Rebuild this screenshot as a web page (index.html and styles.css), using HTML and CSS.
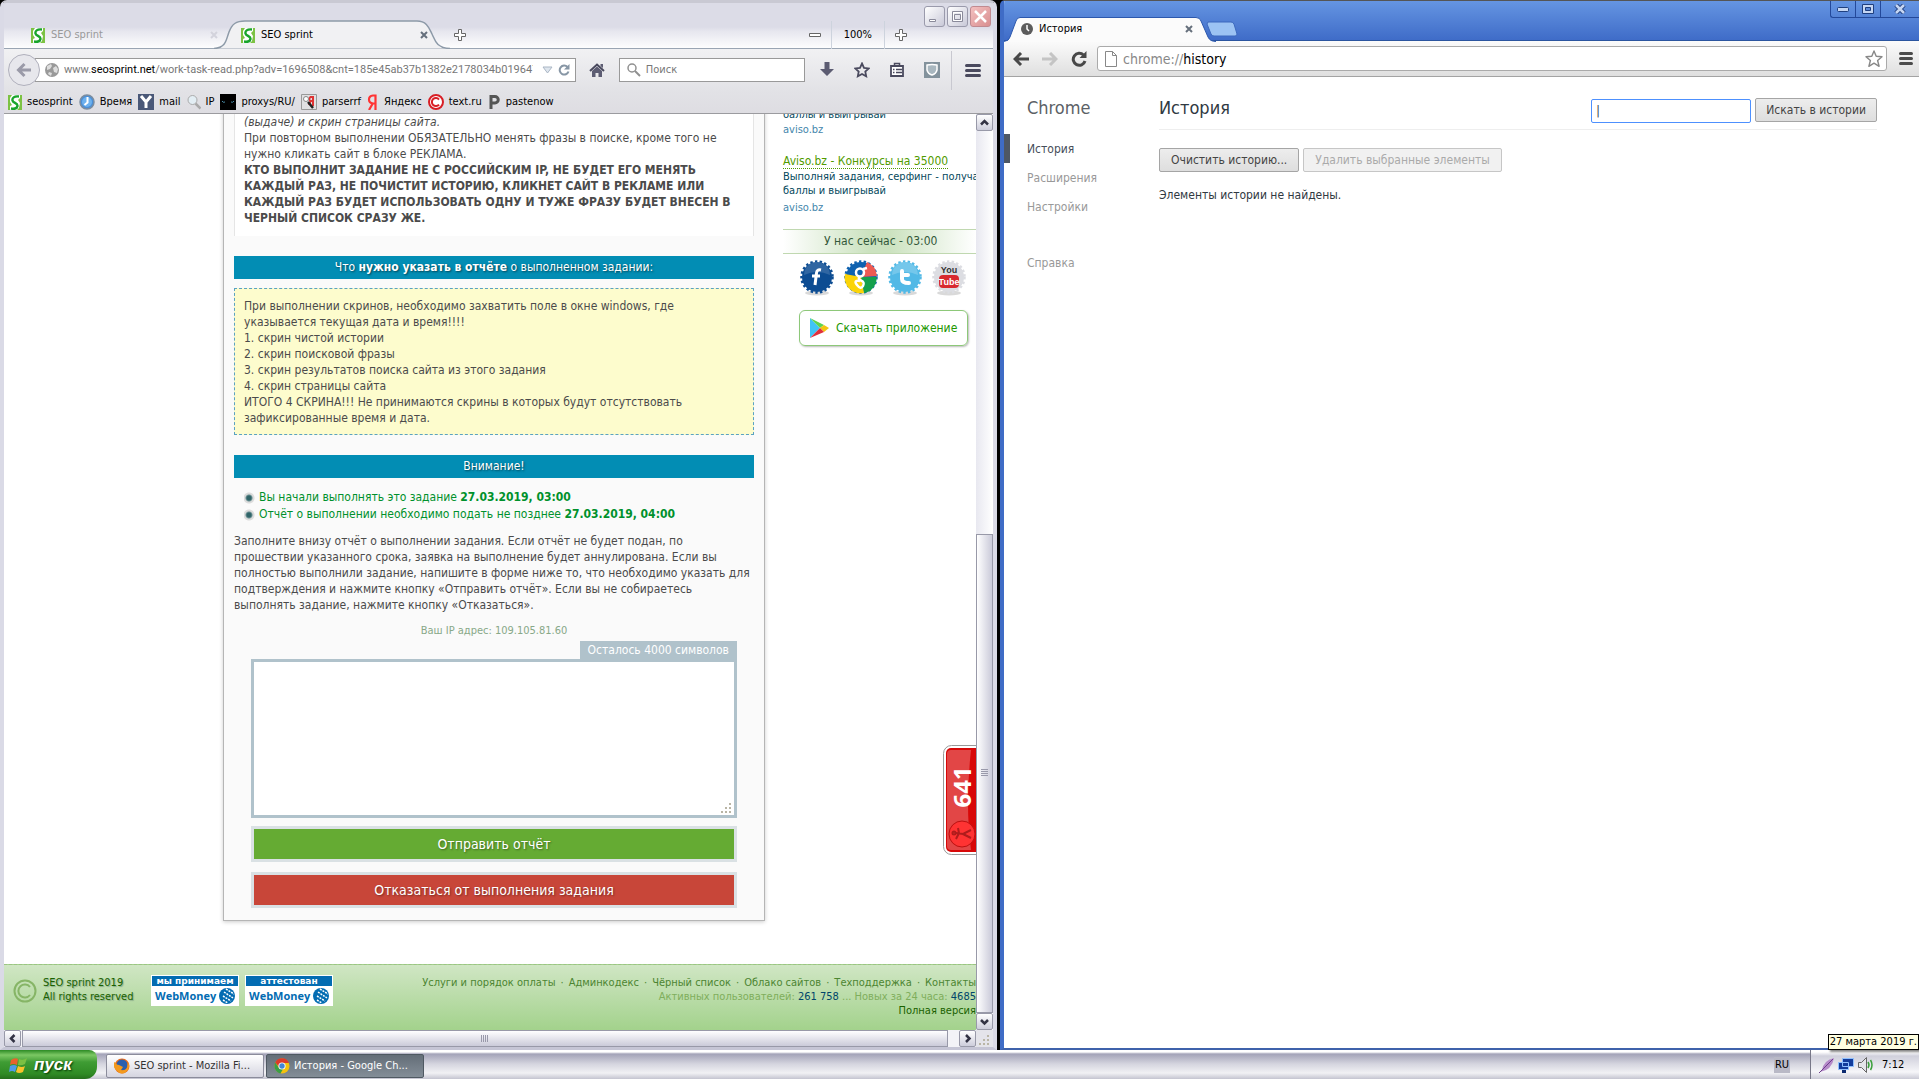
FILE: index.html
```html
<!DOCTYPE html>
<html lang="ru">
<head>
<meta charset="utf-8">
<title>Рабочий стол</title>
<link rel="stylesheet" href="styles.css">
</head>
<body>
<svg class="defs" width="0" height="0" aria-hidden="true">
  <symbol id="seo" viewBox="0 0 14 15"><path fill="#7cc243" d="M0 0h14v15H0z"/><path fill="#fff" d="M4 0h8v3l-2 2 2 3-1 5-2 2H2v-4l2-1-2-3V3z"/><path fill="none" stroke="#18a52c" stroke-width="2.400" d="M11 1.500C6 1 4 3 4.500 5.500S10 8 9.500 11 6 14 3 13.500"/></symbol>
  <symbol id="x" viewBox="0 0 8 8"><path stroke="currentColor" stroke-width="2" d="M1 1l6 6M7 1L1 7"/></symbol>
  <symbol id="chrome" viewBox="0 0 16 16"><circle cx="8" cy="8" r="7.500" fill="#f4c20d"/><path fill="#db3b2b" d="M1.300 4.500A7.500 7.500 0 0 1 15 5H8L5 9z"/><path fill="#3a9e46" d="M1.300 4.500L5 10l4 1-2.500 4.400A7.500 7.500 0 0 1 1.300 4.500z"/><circle cx="8" cy="8" r="3.600" fill="#fff"/><circle cx="8" cy="8" r="2.700" fill="#4285d8"/></symbol>
  <symbol id="globe" viewBox="0 0 14 14"><circle cx="7" cy="7" r="7" fill="#999"/><path fill="#ddd" d="M2 3l4-2 1 2-2 3-3 1zM8 5l3-2 2 3-1 4-3-1zM4 9l3 1-1 3-3-2z"/></symbol>
  <symbol id="wm" viewBox="0 0 88 31"><path fill="#fff" d="M0 0h88v31H0z"/><path fill="#036cb2" d="M1 1h86v10H1z"/><circle cx="76" cy="21" r="8" fill="#036cb2"/><path fill="none" stroke="#fff" stroke-width="1.500" stroke-dasharray="2 1" d="M75 14l8 5M73 17l9 6M72 21l8 5M72 25l5 3"/></symbol>
  <symbol id="gear" viewBox="0 0 34 36"><ellipse cx="17" cy="33" rx="12" ry="2.500" fill="#000" opacity=".15"/><circle cx="17" cy="17" r="15" fill="currentColor"/><circle cx="17" cy="17" r="15.500" fill="none" stroke="currentColor" stroke-width="2.500" stroke-dasharray="2.400 2.300"/></symbol>
</svg>
<div class="desktop">
  <div class="windows">
    <section class="fx" aria-label="Mozilla Firefox">
      <div class="fx-tabs">
        <div class="fx-tab"><svg width="14" height="15"><use href="#seo"/></svg><span>SEO sprint</span><button class="plain pale" aria-label="Закрыть вкладку"><svg width="8" height="8"><use href="#x"/></svg></button></div>
        <div class="fx-tab active"><svg class="tab-shape" viewBox="0 0 236 29" preserveAspectRatio="none"><path fill="#f1f1f3" stroke="#8d9aa8" stroke-width="1.500" d="M0 28.500C12 28 12 20 15 12S22 1 31 1H203C213 1 215 8 218 14S222 28 236 28.500"/></svg><svg width="14" height="15"><use href="#seo"/></svg><span>SEO sprint</span><button class="plain slate" aria-label="Закрыть вкладку"><svg width="8" height="8"><use href="#x"/></svg></button></div>
        <button class="plain newtab" aria-label="Новая вкладка"><svg width="12" height="12"><path fill="#fff" stroke="#666" d="M4.500.5h3v4h4v3h-4v4h-3v-4h-4v-3h4z"/></svg></button>
        <div class="zoom"><button class="plain" aria-label="Уменьшить"><svg width="12" height="12"><path fill="#fff" stroke="#666" d="M.5 4.500h11v3H.5z"/></svg></button><span class="zoom-value">100%</span><button class="plain" aria-label="Увеличить"><svg width="12" height="12"><path fill="#fff" stroke="#666" d="M4.500.5h3v4h4v3h-4v4h-3v-4h-4v-3h4z"/></svg></button></div>
        <div class="fx-controls"><button aria-label="Свернуть"><svg width="13" height="13"><path fill="#fff" stroke="#8a8a9a" d="M1.500 9.500h6v2h-6z"/></svg></button><button aria-label="Развернуть"><svg width="13" height="13"><path fill="none" stroke="#8a8a9a" d="M1.500 1.500h10v10h-10zM3.500 4.500h6v5h-6z"/><path fill="none" stroke="#fff" d="M2.500 2.500h8v8h-8z"/></svg></button><button class="red" aria-label="Закрыть"><svg width="13" height="13"><path stroke="#fff" stroke-width="2.500" d="M1 1l11 11M12 1L1 12"/></svg></button></div>
      </div>
      <div class="fx-nav">
        <button class="back" aria-label="Назад"><svg width="16" height="16"><path fill="none" stroke="#9a9aa8" stroke-width="3" d="M15 8H3M8.500 2L2.500 8l6 6"/></svg></button>
        <div class="url"><svg width="14" height="14"><use href="#globe"/></svg><span class="url-text">www.<b>seosprint.net</b>/work-task-read.php?adv=1696508&amp;cnt=185e45ab37b1382e2178034b0196470</span><svg width="11" height="8"><path fill="#dfe6ee" stroke="#aab6c4" d="M1 1h9L5.500 7z"/></svg><svg width="12" height="12"><path fill="none" stroke="#8796a5" stroke-width="2" d="M9.500 3A4.500 4.500 0 1 0 10.500 7.500"/><path fill="#8796a5" d="M6 5.500h5.500V0z"/></svg></div>
        <button class="plain home" aria-label="Домой"><svg width="16" height="15"><path fill="none" stroke="#4a4a5e" stroke-width="2" d="M1 8l7-6.500L15 8"/><path fill="#5c5c72" d="M11.500 1H14v4l-2.500-2zM3 8l5-4.500L13 8v6H9.500v-4h-3v4H3z"/></svg></button>
        <label class="fx-search"><svg width="14" height="14"><circle cx="5" cy="5" r="4" fill="none" stroke="#909090" stroke-width="1.500"/><path stroke="#909090" stroke-width="2" d="M8 8l5 5"/></svg><input type="text" placeholder="Поиск" aria-label="Поиск"></label>
        <div class="fx-icons">
          <button class="plain" aria-label="Загрузки"><svg width="14" height="15"><path fill="#5c5c72" d="M4.500 0h5v7H14l-7 7-7-7h4.500z"/></svg></button>
          <button class="plain" aria-label="Закладка"><svg width="16" height="16"><path fill="none" stroke="#4a4a5e" stroke-width="1.800" d="M8 1.500l2 4.300 4.700.6-3.400 3.200.9 4.700L8 12l-4.200 2.300.9-4.700L1.300 6.400 6 5.800z"/></svg></button>
          <button class="plain" aria-label="Список закладок"><svg width="14" height="15"><path fill="#fff" stroke="#4a4a5e" stroke-width="1.800" d="M1 4h12v10H1z"/><path fill="none" stroke="#4a4a5e" stroke-width="1.500" d="M4.500 4V1.500h5V4M3 7.500h1.500M6 7.500h6M3 10.500h1.500M6 10.500h6"/></svg></button>
          <button class="plain" aria-label="Защита"><svg width="16" height="16"><path fill="#83929c" d="M0 0h16v16H0z"/><path fill="#a9b7bf" stroke="#fff" stroke-width="1.500" d="M3 3q5-1 10 0v5q-1 4-5 5-4-1-5-5z"/></svg></button>
        </div>
        <button class="plain burger" aria-label="Меню"><svg width="16" height="13"><path stroke="#4a4a5e" stroke-width="3" stroke-linecap="round" d="M1.500 1.500h13M1.500 6.500h13M1.500 11.500h13"/></svg></button>
      </div>
      <nav class="bookmarks">
        <a href="#"><svg width="14" height="15"><use href="#seo"/></svg>seosprint</a>
        <a href="#"><svg width="16" height="16"><circle cx="8" cy="8" r="7" fill="#4b8fd8" stroke="#7b8da0" stroke-width="1.500"/><circle cx="8" cy="8" r="5" fill="#6db1ee"/><path fill="none" stroke="#fff" stroke-width="2" d="M8.500 3v5.500L5.500 11"/></svg>Время</a>
        <a href="#"><svg width="16" height="16"><path fill="#4a5878" d="M0 0h16v16H0z"/><path fill="none" stroke="#fff" stroke-width="3" d="M3 2l5 6 5-6M8 8v6"/></svg>mail</a>
        <a href="#"><svg width="14" height="16"><circle cx="5.500" cy="6" r="4.500" fill="#e3eef4" stroke="#aaa"/><path stroke="#aaa" stroke-width="2.500" d="M8.500 9.500l5 5"/></svg>IP</a>
        <a href="#"><svg width="16" height="16"><path d="M0 0h16v16H0z"/><path fill="none" stroke="#4a8ca8" d="M2 7q1 2 3 1M11 8q2 1 3-1"/></svg>proxys/RU/</a>
        <a href="#"><svg width="16" height="16"><path fill="#e0e0e2" stroke="#999" d="M.5.5h15v15H.5z"/><path fill="none" stroke="#d33" stroke-width="2" d="M12 2v10M12 3H9.500L8 5l1.500 2H12M9.500 7L8 11"/><circle cx="5" cy="5" r="2.500" fill="#fff" stroke="#888"/><path stroke="#222" stroke-width="2.500" d="M7 8l5 6"/></svg>parserrf</a>
        <a href="#"><svg width="12" height="16"><path fill="none" stroke="#f33" stroke-width="2.200" d="M8.500 16V1.500H6Q2 2 2 5.500T6 9.500h2M6 9L2 16"/></svg>Яндекс</a>
        <a href="#"><svg width="16" height="16"><circle cx="8" cy="8" r="7" fill="#fff" stroke="#d81f26" stroke-width="2"/><path fill="none" stroke="#d81f26" stroke-width="2" d="M11 5.500a4 4 0 1 0 0 5"/></svg>text.ru</a>
        <a href="#"><svg width="13" height="16"><path fill="none" stroke="#555" stroke-width="3" d="M3 15V2.500h4a3 3 0 0 1 0 6.500H3"/></svg>pastenow</a>
      </nav>
      <div class="fx-view">
        <div class="page">
          <div class="page-body">
            <main class="card">
              <div class="task-text"><p><i>скрин поисковой фразы, скрин результатов поиска сайта в поиске<br>(выдаче) и скрин страницы сайта.</i></p><p>При повторном выполнении ОБЯЗАТЕЛЬНО менять фразы в поиске, кроме того не<br>нужно кликать сайт в блоке РЕКЛАМА.</p><p><b>КТО ВЫПОЛНИТ ЗАДАНИЕ НЕ С РОССИЙСКИМ IP, НЕ БУДЕТ ЕГО МЕНЯТЬ<br>КАЖДЫЙ РАЗ, НЕ ПОЧИСТИТ ИСТОРИЮ, КЛИКНЕТ САЙТ В РЕКЛАМЕ ИЛИ<br>КАЖДЫЙ РАЗ БУДЕТ ИСПОЛЬЗОВАТЬ ОДНУ И ТУЖЕ ФРАЗУ БУДЕТ ВНЕСЕН В<br>ЧЕРНЫЙ СПИСОК СРАЗУ ЖЕ.</b></p></div>
              <h2 class="bar">Что <b>нужно указать в отчёте</b> о выполненном задании:</h2>
              <div class="note">При выполнении скринов, необходимо захватить поле в окне windows, где<br>указывается текущая дата и время!!!!<br>1. скрин чистой истории<br>2. скрин поисковой фразы<br>3. скрин результатов поиска сайта из этого задания<br>4. скрин страницы сайта<br>ИТОГО 4 СКРИНА!!! Не принимаются скрины в которых будут отсутствовать<br>зафиксированные время и дата.</div>
              <h2 class="bar">Внимание!</h2>
              <ul class="dates"><li>Вы начали выполнять это задание <b>27.03.2019, 03:00</b></li><li>Отчёт о выполнении необходимо подать не позднее <b>27.03.2019, 04:00</b></li></ul>
              <p class="hint">Заполните внизу отчёт о выполнении задания. Если отчёт не будет подан, по<br>прошествии указанного срока, заявка на выполнение будет аннулирована. Если вы<br>полностью выполнили задание, напишите в форме ниже то, что необходимо указать для<br>подтверждения и нажмите кнопку «Отправить отчёт». Если вы не собираетесь<br>выполнять задание, нажмите кнопку «Отказаться».</p>
              <p class="ip">Ваш IP адрес: 109.105.81.60</p>
              <form class="report">
                <label class="left-count" for="rep">Осталось 4000 символов</label>
                <div class="area"><textarea id="rep"></textarea><svg class="grip" width="12" height="12"><path stroke="#b9b5a5" stroke-width="2" stroke-dasharray="2 2" d="M8 1h2M4 5h6M0 9h10"/></svg></div>
                <button type="button" class="send">Отправить отчёт</button>
                <button type="button" class="refuse">Отказаться от выполнения задания</button>
              </form>
            </main>
            <aside class="side">
              <div class="cut">баллы и выигрывай</div>
              <a class="site" href="#">aviso.bz</a>
              <a class="ad" href="#">Aviso.bz - Конкурсы на 35000</a>
              <p class="ad-text">Выполняй задания, серфинг - получай<br>баллы и выигрывай</p>
              <a class="site" href="#">aviso.bz</a>
              <div class="clock">У нас сейчас - 03:00</div>
              <div class="social">
                <a href="#" aria-label="Facebook"><svg class="c-fb" width="34" height="36"><use href="#gear"/><path fill="#fff" opacity=".15" d="M4 15a13 13 0 0 1 26 0q-13-6-26 0z"/><path fill="none" stroke="#fff" stroke-width="3" d="M21 10q-4-1-4.500 3L15 25M12 16h8"/></svg></a>
                <a href="#" aria-label="Google"><svg class="c-g" width="34" height="36"><use href="#gear"/><path fill="#ee5a52" d="M17 17L23 2Q32 6 33 16z"/><path fill="#15a04c" d="M17 17l15.500 0A15 15 0 0 1 20 33z"/><path fill="#fbd408" d="M17 17l3 16A16 16 0 0 1 1 14z"/><g fill="none" stroke="#fff" stroke-width="2.500"><circle cx="16" cy="12.500" r="4"/><path d="M19 9l4-1M16 17q-3 2 1 3.500T19 26t-6-1 3-4"/></g></svg></a>
                <a href="#" aria-label="Twitter"><svg class="c-tw" width="34" height="36"><use href="#gear"/><path fill="#fff" opacity=".2" d="M4 15a13 13 0 0 1 26 0q-13-6-26 0z"/><path fill="none" stroke="#fff" stroke-width="4" stroke-linecap="round" d="M14 11v8q0 4 7 4M14 15h6"/></svg></a>
                <a href="#" aria-label="YouTube"><svg class="c-yt" width="34" height="36"><use href="#gear"/><rect x="7" y="15" width="20" height="13" rx="4" fill="#d8292f"/><text x="17" y="13" class="yt yt-dark">You</text><text x="17" y="25" class="yt">Tube</text></svg></a>
              </div>
              <a class="app" href="#"><svg width="21" height="22"><path fill="#40c4f5" d="M1 1v20L11 11z"/><path fill="#5ed34e" d="M1 1l14 7-4 3z"/><path fill="#f2c510" d="M15 8l5 3-5 4-4-4z"/><path fill="#e0303c" d="M1 21l10-10 4 4z"/></svg>Скачать приложение</a>
            </aside>
            <a class="badge" href="#" aria-label="641"><svg width="34" height="112"><rect x="1.500" y="1.500" width="50" height="109" rx="8" fill="#fff" stroke="#999"/><rect x="4" y="4" width="50" height="104" rx="5" fill="#d80808"/><path fill="#fff" opacity=".25" d="M9 6h20q-6 55 0 100H9q-4 0-4-4V10q0-4 4-4z"/><circle cx="20" cy="90" r="13" fill="#f33" stroke="#b11"/><g fill="none" stroke="#b01c1c" stroke-width="2"><circle cx="12" cy="89" r="1.500"/><path d="M14 89l7 1 8-4M21 90l8 4M16 84l1 5-3 6"/></g><text class="badge-num" transform="rotate(-90)" x="-43" y="29">641</text></svg></a>
          </div>
          <footer class="foot">
            <svg class="copy" width="24" height="24"><circle cx="12" cy="12" r="10.500" fill="none" stroke="#86b566" stroke-width="2"/><path fill="none" stroke="#86b566" stroke-width="2" d="M17 8a6.500 6.500 0 1 0 0 8"/></svg>
            <p class="rights">SEO sprint 2019<br>All rights reserved</p>
            <a class="wm" href="#"><svg width="88" height="31"><use href="#wm"/><text class="wm-top" x="44" y="9">мы принимаем</text><text class="wm-name" x="4" y="25">WebMoney</text></svg></a>
            <a class="wm" href="#"><svg width="88" height="31"><use href="#wm"/><text class="wm-top" x="44" y="9">аттестован</text><text class="wm-name" x="4" y="25">WebMoney</text></svg></a>
            <div class="foot-right">
              <nav><a href="#">Услуги и порядок оплаты</a><i>·</i><a href="#">Админкодекс</a><i>·</i><a href="#">Чёрный список</a><i>·</i><a href="#">Облако сайтов</a><i>·</i><a href="#">Техподдержка</a><i>·</i><a href="#">Контакты</a></nav>
              <p class="stat">Активных пользователей: <b>261 758</b> ... Новых за 24 часа: <b>4685</b></p>
              <a class="full" href="#">Полная версия</a>
            </div>
          </footer>
        </div>
        <div class="vbar"><button class="sb" aria-label="Вверх"><svg width="9" height="9"><path fill="none" stroke="#334" stroke-width="2.500" d="M1 6.500L4.500 3 8 6.500"/></svg></button><div class="v-gap"></div><div class="v-thumb"><svg width="7" height="8"><path stroke="#99a" d="M0 .5h7M0 2.500h7M0 4.500h7M0 6.500h7"/></svg></div><button class="sb" aria-label="Вниз"><svg width="9" height="9"><path fill="none" stroke="#334" stroke-width="2.500" d="M1 3l3.500 3.500L8 3"/></svg></button></div>
        <div class="hbar"><button class="sb" aria-label="Влево"><svg width="9" height="9"><path fill="none" stroke="#334" stroke-width="2.500" d="M6.500 1L3 4.500 6.500 8"/></svg></button><div class="h-thumb"><svg width="8" height="7"><path stroke="#99a" d="M.5 0v7M2.500 0v7M4.500 0v7M6.500 0v7"/></svg></div><button class="sb" aria-label="Вправо"><svg width="9" height="9"><path fill="none" stroke="#334" stroke-width="2.500" d="M3 1l3.500 3.500L3 8"/></svg></button></div>
        <div class="corner"><svg width="12" height="12"><path stroke="#b9b5a5" stroke-width="2" stroke-dasharray="2 2" d="M8 1h2M4 5h6M0 9h10"/></svg></div>
      </div>
    </section>

    <section class="gc" aria-label="Google Chrome">
      <div class="gc-title">
        <div class="gc-tab"><svg class="gc-shape" viewBox="0 0 212 25" preserveAspectRatio="none"><path fill="#fbfbfb" stroke="#2c58ad" d="M0 24.500Q5 24 6 20L12 4Q13 .5 16 .5H192Q196 .5 197 4L204 20Q206 24.500 212 24.500"/></svg><svg width="12" height="12"><circle cx="6" cy="6" r="6" fill="#5c5c5c"/><path fill="none" stroke="#fff" stroke-width="1.500" d="M6 2v4l2 2"/></svg><span>История</span><button class="plain slate" aria-label="Закрыть вкладку"><svg width="8" height="8"><use href="#x"/></svg></button></div>
        <button class="plain gc-new" aria-label="Новая вкладка"><svg width="32" height="16"><path fill="#9cc3f3" stroke="#3c69bd" d="M2 1h23q2 0 3 2l3 10q0 2-2 2H8q-2 0-3-2L1 3z"/></svg></button>
        <div class="gc-controls"><button aria-label="Свернуть"><svg width="12" height="6"><rect x=".5" y="1.500" width="11" height="4" rx="1" fill="#c5d6f3" stroke="#1f3f7f"/></svg></button><button aria-label="Развернуть"><svg width="12" height="10"><path fill="#c5d6f3" stroke="#1f3f7f" d="M.5.5h11v9H.5z"/><path fill="#5b88d8" stroke="#1f3f7f" d="M3.500 3.500h5v3h-5z"/></svg></button><button aria-label="Закрыть"><svg width="12" height="10"><path stroke="#1f3f7f" stroke-width="4.500" d="M2 1l8 8M10 1L2 9"/><path stroke="#c5d6f3" stroke-width="2.500" d="M2 1l8 8M10 1L2 9"/></svg></button></div>
      </div>
      <div class="gc-bar">
        <button class="plain" aria-label="Назад"><svg width="16" height="14"><path fill="none" stroke="#484848" stroke-width="3" d="M16 7H3M8 1L2 7l6 6"/></svg></button>
        <button class="plain" aria-label="Вперёд"><svg width="16" height="14"><path fill="none" stroke="#c4c4c4" stroke-width="3" d="M0 7h13M8 1l6 6-6 6"/></svg></button>
        <button class="plain" aria-label="Обновить"><svg width="16" height="16"><path fill="none" stroke="#484848" stroke-width="3" d="M12.500 4A6 6 0 1 0 14 10"/><path fill="#484848" d="M8.500 7H15.500V0z"/></svg></button>
        <div class="omni"><svg width="12" height="16"><path fill="#fff" stroke="#888" d="M.5.500h7l4 4v11H.5zM7.500.5v4h4"/></svg><span>chrome://<em>history</em></span><svg width="18" height="18"><path fill="#fff" stroke="#888" stroke-width="1.400" stroke-linejoin="round" d="M9 1l2.200 5.300 5.800.4-4.400 3.800 1.500 5.800L9 13.200l-5.100 3.100 1.500-5.800L1 6.700l5.800-.4z"/></svg></div>
        <button class="plain" aria-label="Меню"><svg width="14" height="13"><path stroke="#4c4c4c" stroke-width="3" stroke-linecap="round" d="M1.500 1.500h11M1.500 6.500h11M1.500 11.500h11"/></svg></button>
      </div>
      <div class="gc-view">
        <nav class="gc-nav"><h1>Chrome</h1><a class="on" href="#">История</a><a href="#">Расширения</a><a href="#">Настройки</a><a class="help" href="#">Справка</a></nav>
        <main class="hist">
          <header><h1>История</h1><input type="text" aria-label="Поиск в истории" value="|"><button>Искать в истории</button></header>
          <div class="acts"><button>Очистить историю...</button><button disabled>Удалить выбранные элементы</button></div>
          <p>Элементы истории не найдены.</p>
        </main>
      </div>
    </section>
  </div>

  <div class="taskbar">
    <button class="start"><svg width="18" height="18"><path fill="#e8622c" d="M2 4q4-3 7-1L8 9Q4 7 1 9z"/><path fill="#7bc043" d="M10 3q4 2 8-1l-2 6q-4 2-7 1z"/><path fill="#4f9be8" d="M1 10q4-2 7 0l-2 6q-3-2-6 0z"/><path fill="#f8c32c" d="M9 10q4 2 7 0l-2 6q-4 2-7 0z"/></svg>пуск</button>
    <button class="task"><svg width="16" height="16"><circle cx="8" cy="8" r="7.500" fill="#e66a1c"/><circle cx="8" cy="7" r="5.500" fill="#2a5fae"/><path fill="#f39a1e" d="M1 4q1 3 4 3l4 2-2 3q4 1 6-2l1-6q3 6-2 10T2 12 1 4z"/></svg>SEO sprint - Mozilla Fi...</button>
    <button class="task pressed"><svg width="16" height="16"><use href="#chrome"/></svg>История - Google Ch...</button>
    <span class="lang">RU</span>
    <div class="tray"><svg width="16" height="16"><path fill="#b58ac9" d="M15 1Q5 3 3 13L1 15Q13 13 15 1z"/><path stroke="#6d3e8c" d="M14 2L0 16"/></svg><svg width="18" height="16"><path fill="#123c9c" stroke="#8fc0ff" d="M5.500 1.500h11v8h-11zM1.500 5.500h10v7h-10z"/><path fill="#0c2a70" d="M5 13h4v3H5z"/></svg><svg width="18" height="16"><path fill="#e5e5ea" stroke="#666" d="M1.500 5.500h3l5-5v15l-5-5h-3z"/><path fill="none" stroke="#3ba03b" stroke-width="1.500" d="M11 5q2 3 0 6M13.500 3q3 5 0 10"/></svg><time>7:12</time></div>
    <div class="tip" role="tooltip">27 марта 2019 г.</div>
  </div>
</div>
</body>
</html>
```

FILE: styles.css
```css
* { box-sizing: border-box; }
body { margin: 0; background: #000; font: 11px/14px "DejaVu Sans Condensed", "Noto Sans", sans-serif; color: #000; }
h1, h2, p, ul { margin: 0; padding: 0; font-weight: normal; }
a { color: inherit; text-decoration: none; }
button, input, textarea { font: inherit; color: inherit; }
svg { flex: none; display: block; }
.defs { position: absolute; }
.plain { background: none; border: 0; padding: 0; display: flex; }
.pale { color: #d3d3dc; }
.slate { color: #66707c; }

.desktop { height: 100vh; display: flex; flex-direction: column; overflow: hidden; }
.windows { flex: 1; min-height: 0; display: grid; grid-template-columns: minmax(0, 997fr) minmax(0, 919fr); gap: 3px; }

/* Firefox */
.fx { display: flex; flex-direction: column; min-height: 0; border: solid #dadae6; border-width: 3px 4px; border-top-color: #c9c9d3; border-bottom-color: #c5c5d5; border-radius: 7px 7px 0 0; background: #dfdee3; overflow: hidden; }
.fx-tabs { position: relative; flex: none; height: 46px; display: flex; align-items: flex-end; padding-left: 4px; background: linear-gradient(#dcdce7 0 24px, #e6e6ee 28px, #fff 46px); border-bottom: 1px solid #9aa5b3; }
.fx-tab { position: relative; width: 210px; height: 28px; display: flex; align-items: center; gap: 6px; padding: 2px 0 0 23px; color: #999; }
.fx-tab span { flex: 1; position: relative; }
.fx-tab button, .fx-tab svg { position: relative; }
.fx-tab .tab-shape { position: absolute; left: -4px; top: 0; width: 236px; height: 29px; }
.active { color: #000; z-index: 1; }
.newtab { margin: 0 0 7px 26px; }
.zoom { margin: 0 86px 0 auto; display: flex; align-items: center; height: 28px; padding-top: 2px; gap: 10px; }
.zoom-value { padding: 7px 12px; border: solid #cdd3dd; border-width: 0 1px; }
.fx-controls { position: absolute; right: 2px; top: 3px; display: flex; gap: 2px; }
.fx-controls button { width: 21px; height: 21px; padding: 3px; border: 1px solid #9a9aab; border-radius: 3px; background: linear-gradient(135deg, #fff, #c9c9d8); }
.fx-controls .red { background: linear-gradient(135deg, #f3c0c0, #d98f90); border-color: #c08a90; }
.fx-nav { flex: none; height: 42px; display: flex; align-items: center; padding-left: 4px; background: linear-gradient(#f1f1f3, #e2e2e6); }
.back { width: 32px; height: 32px; border: 1px solid #b0b0bc; border-radius: 16px; background: #e7e7ec; padding: 7px; z-index: 1; }
.url { flex: 545; min-width: 0; height: 24px; margin-left: -5px; padding: 0 5px 0 9px; display: flex; align-items: center; gap: 5px; background: #fff; border: 1px solid #999; color: #777; }
.url-text { flex: 1; margin-right: 4px; white-space: nowrap; overflow: hidden; font-family: Roboto, "Noto Sans", sans-serif; }
.url b { font-weight: normal; color: #000; }
.home { margin: 0 14px 0 13px; }
.fx-search { flex: 184; min-width: 0; height: 24px; display: flex; align-items: center; gap: 5px; padding-left: 7px; background: #fff; border: 1px solid #999; }
.fx-search input { width: 100%; min-width: 0; border: 0; padding: 0; background: none; }
.fx-search input::placeholder { color: #777; opacity: 1; }
.fx-icons { display: flex; gap: 20px; margin: 0 11px 0 15px; }
.burger { border-left: 1px solid #c8c8d0; padding: 13px 12px 13px 13px; }
.bookmarks { flex: none; height: 23px; display: flex; align-items: center; gap: 6px; padding: 0 4px; border-bottom: 1px solid #9b9b9f; background: linear-gradient(#e2e2e6, #dedde2); }
.bookmarks a { display: flex; align-items: center; gap: 5px; }
.fx-view { flex: 1; min-height: 0; display: grid; grid-template: minmax(0, 1fr) 17px / minmax(0, 1fr) 17px; background: #fff; }

.page { display: flex; flex-direction: column; overflow: hidden; font-size: 12px; line-height: 16px; color: #4b4b4b; }
.page-body { position: relative; flex: 1; min-height: 0; display: flex; align-items: flex-end; overflow: hidden; }
.card { flex: none; width: 542px; margin: 0 18px 43px 219px; padding: 0 10px 12px; background: #fafafa; border: 1px solid #b5b5b5; box-shadow: 0 1px 4px #ccc; }
.task-text { background: #fff; border: solid #e5e5e5; border-width: 0 1px; padding: 0 9px 10px; white-space: nowrap; }
.bar { height: 23px; margin-top: 20px; background: #028db4; color: #fff; font-size: 12px; line-height: 23px; text-align: center; text-shadow: 1px 1px 2px #045; }
.note { margin-top: 9px; padding: 9px 9px 8px; background: #fdfccd; border: 1px dashed #5aa2c2; }
.dates { list-style: none; margin: 11px 0 10px 10px; color: #00912c; line-height: 17px; }
.dates li { padding-left: 15px; background: radial-gradient(circle at 5px 9px, #2f6468 0 2px, #6a8f92 3px, #dcdcdc 4px 5px, transparent 6px); }
.hint { white-space: nowrap; }
.ip { margin: 10px 0 2px; font-size: 11px; text-align: center; color: #88a888; }
.report { display: flex; flex-direction: column; margin: 0 17px; }
.left-count { align-self: flex-end; height: 18px; line-height: 18px; padding: 0 8px; background: #b0c2cb; color: #fff; }
.area { position: relative; height: 159px; }
.area textarea { display: block; width: 100%; height: 100%; resize: none; border: 3px solid #b0c2cb; background: #fff; outline: 0; }
.grip { position: absolute; right: 4px; bottom: 3px; }
.send, .refuse { height: 36px; margin-top: 8px; border: 3px solid #dae1e4; color: #fff; font-size: 14px; line-height: 18px; background: #65ab33; text-shadow: 1px 1px 2px #0006; }
.refuse { margin-top: 10px; background: #c84639; }
.side { align-self: flex-start; flex: 1; min-width: 0; font-size: 11px; white-space: nowrap; color: #04485c; display: flex; flex-direction: column; }
.cut { height: 8px; line-height: 14px; overflow: hidden; display: flex; align-items: flex-end; }
.site { color: #4486ab; }
.ad { align-self: flex-start; margin: 16px 0 1px; line-height: 14px; font-size: 12px; color: #519b00; border-bottom: 1px dotted #519b00; }
.ad-text { line-height: 14px; margin-bottom: 2px; }
.clock { margin-top: 13px; height: 25px; line-height: 23px; padding-left: 41px; font-size: 12px; color: #33583a; border: solid #c0d8b0; border-width: 1px 0; background: linear-gradient(90deg, #fff, #cbe2bf 45%, #cbe2bf 55%, #fff); }
.social { display: flex; gap: 10px; margin: 6px 0 14px 17px; }
.c-fb { color: #0c4c92; } .c-g { color: #0f62b0; } .c-tw { color: #52b9e6; } .c-yt { color: #dcdde2; }
.yt { font: bold 9px "Liberation Sans", sans-serif; fill: #fff; text-anchor: middle; } .yt-dark { fill: #333; }
.app { width: 169px; height: 36px; margin-left: 16px; display: flex; align-items: center; gap: 6px; padding-left: 9px; border: 1px solid #8dc879; border-radius: 6px; box-shadow: 1px 1px 2px #bbb; font-size: 12px; color: #219600; }
.badge { position: absolute; right: 0; bottom: 108px; }
.badge-num { font: bold 24px "Open Sans", "Noto Sans", sans-serif; fill: #fff; text-anchor: middle; }
.foot { flex: none; height: 66px; display: flex; align-items: flex-start; padding: 10px 0 0 9px; border-top: 1px dashed #9cc384; background: linear-gradient(#d0e6c4, #a3d28c); font-size: 11px; line-height: 14px; color: #1a6100; }
.copy { margin-top: 4px; }
.rights { width: 108px; margin: 1px 0 0 6px; white-space: nowrap; text-shadow: 1px 1px 1px #8a8; }
.wm { margin-right: 6px; }
.wm-top { font: bold 9px "DejaVu Sans", sans-serif; fill: #fff; text-anchor: middle; }
.wm-name { font: bold 11px "Open Sans", "Noto Sans", sans-serif; fill: #036cb2; }
.foot-right { margin: 1px 0 0 auto; text-align: right; white-space: nowrap; }
.foot-right nav { color: #4c8531; }
.foot-right i { margin: 0 5px; font-style: normal; }
.stat { color: #7fae5c; }
.stat b { font-weight: normal; color: #00456a; }

.sb { width: 17px; height: 17px; flex: none; padding: 3px; border: 1px solid #9899a8; border-radius: 2px; background: linear-gradient(#fff, #cdcddb); }
.vbar { display: flex; flex-direction: column; background: linear-gradient(90deg, #e8e8f0, #fff); }
.v-gap { flex: 403; }
.v-thumb { flex: 478; display: grid; place-items: center; border: 1px solid #9899a8; background: linear-gradient(90deg, #fff, #cacad9); }
.hbar { display: flex; gap: 1px; background: #f3f3f7; }
.h-thumb { flex: 1; margin-right: 10px; display: grid; place-items: center; border: 1px solid #9899a8; background: linear-gradient(#fff, #cacad9); }
.corner { background: #e4e4ea; padding: 5px 3px; }

/* Chrome */
.gc { display: flex; flex-direction: column; min-height: 0; border-left: 4px solid #3f6cc6; border-top: 1px solid #555; border-bottom: 2px solid #3f62ab; border-radius: 5px 0 0; background: #fff; overflow: hidden; }
.gc-title { flex: none; height: 40px; display: flex; align-items: flex-end; background: linear-gradient(#6595e2, #3f6cc8); border-bottom: 1px solid #2b559f; }
.gc-tab { position: relative; width: 205px; height: 24px; margin-bottom: -1px; display: flex; align-items: center; gap: 6px; padding: 0 16px 0 17px; }
.gc-tab span { flex: 1; }
.gc-tab > * { position: relative; }
.gc-tab .gc-shape { position: absolute; left: 0; top: 0; width: 212px; height: 25px; }
.gc-new { margin: 0 0 3px -3px; }
.gc-controls { margin-left: auto; align-self: flex-start; display: flex; border: 1px solid #24499a; border-width: 0 0 1px 1px; border-radius: 0 0 0 3px; }
.gc-controls button { width: 25px; height: 16px; padding: 0; border: 0; border-right: 1px solid #24499a; background: none; display: grid; place-items: center; }
.gc-controls button:last-child { width: 38px; border: 0; }
.gc-bar { flex: none; height: 36px; display: flex; align-items: center; gap: 12px; padding: 0 6px 0 9px; background: linear-gradient(#fbfbfb, #dfdfdf); border-bottom: 1px solid #a3a3a3; }
.gc-bar button:nth-child(-n+2) { margin-right: 1px; }
.omni { flex: 1; height: 25px; display: flex; align-items: center; gap: 6px; padding: 0 3px 0 7px; margin-left: -2px; background: #fff; border: 1px solid #aaa; border-radius: 3px; font-size: 14px; line-height: 20px; color: #888; }
.omni span { flex: 1; }
.omni em { font-style: normal; color: #000; }
.gc-view { flex: 1; display: flex; font-size: 12px; line-height: 16px; color: #303942; }
.gc-nav { width: 155px; flex: none; display: flex; flex-direction: column; padding-top: 18px; }
.gc-nav a { padding: 7px 0 6px 23px; color: #999; }
.gc-nav .on { padding-left: 17px; border-left: 6px solid #4e5764; color: #464e5a; }
.gc-nav .help { margin-top: 27px; }
h1 { font-size: 18px; line-height: 26px; }
.gc-nav h1 { padding-left: 23px; margin-bottom: 13px; color: #5c6166; }
.hist { flex: 1; padding: 18px 42px 0 0; }
.hist header { display: flex; align-items: flex-start; gap: 4px; padding-bottom: 6px; border-bottom: 1px solid #eee; }
.hist header h1 { flex: 1; }
.hist header input { width: 160px; height: 24px; margin-top: 4px; padding: 0 4px; border: 1px solid #4d90fe; border-radius: 2px; outline: 0; }
.hist button { height: 24px; padding: 0 11px; border: 1px solid #a5a5a5; border-radius: 2px; background: linear-gradient(#ededed, #dedede); color: #444; }
.hist header button { margin-top: 3px; padding: 0 10px; }
.hist button:disabled { border-color: #c6c6c6; color: #aaa; background: #f1f1f1; }
.acts { display: flex; gap: 4px; margin: 18px 0 15px; }

/* Taskbar */
.taskbar { position: relative; flex: none; height: 29px; display: flex; align-items: stretch; background: linear-gradient(#fff 0 2px, #a3a3b8 4px, #d5d5df 14px, #f1f1f4 23px, #c4c4d0); }
.start { width: 97px; border: 0; border-radius: 0 8px 12px 0; padding: 0 0 0 9px; display: flex; align-items: center; gap: 7px; background: linear-gradient(#2c8a24, #7cc864 5px, #3f9c34 12px, #2f8a24 24px, #256f1c); color: #fff; font: italic bold 17px "Liberation Sans", sans-serif; text-shadow: 1px 1px 2px #030; }
.task { width: 158px; margin: 4px 0 1px 9px; padding: 0 7px; display: flex; align-items: center; gap: 4px; border: 1px solid #8b8c9b; border-radius: 2px; background: linear-gradient(#fff, #d5d5e0); color: #333; white-space: nowrap; }
.task + .task { margin-left: 2px; }
.pressed { background: linear-gradient(#646e78, #838d97); border-color: #4f5962; color: #fff; }
.lang { margin: 7px 20px 6px auto; padding: 1px 1px; background: #b9b9c6; }
.tray { display: flex; align-items: center; gap: 2px; width: 109px; padding-left: 8px; border-left: 1px solid #777788; background: linear-gradient(#fff 0 2px, #d0d0dc 6px, #f6f6f9 22px, #c9c9d5); }
.tray time { margin-left: 5px; }
.tip { position: absolute; right: 0; bottom: 29px; padding: 0 1px; border: 1px solid #000; background: #ffffe1; box-shadow: 2px 2px 2px #888; white-space: nowrap; }
```
